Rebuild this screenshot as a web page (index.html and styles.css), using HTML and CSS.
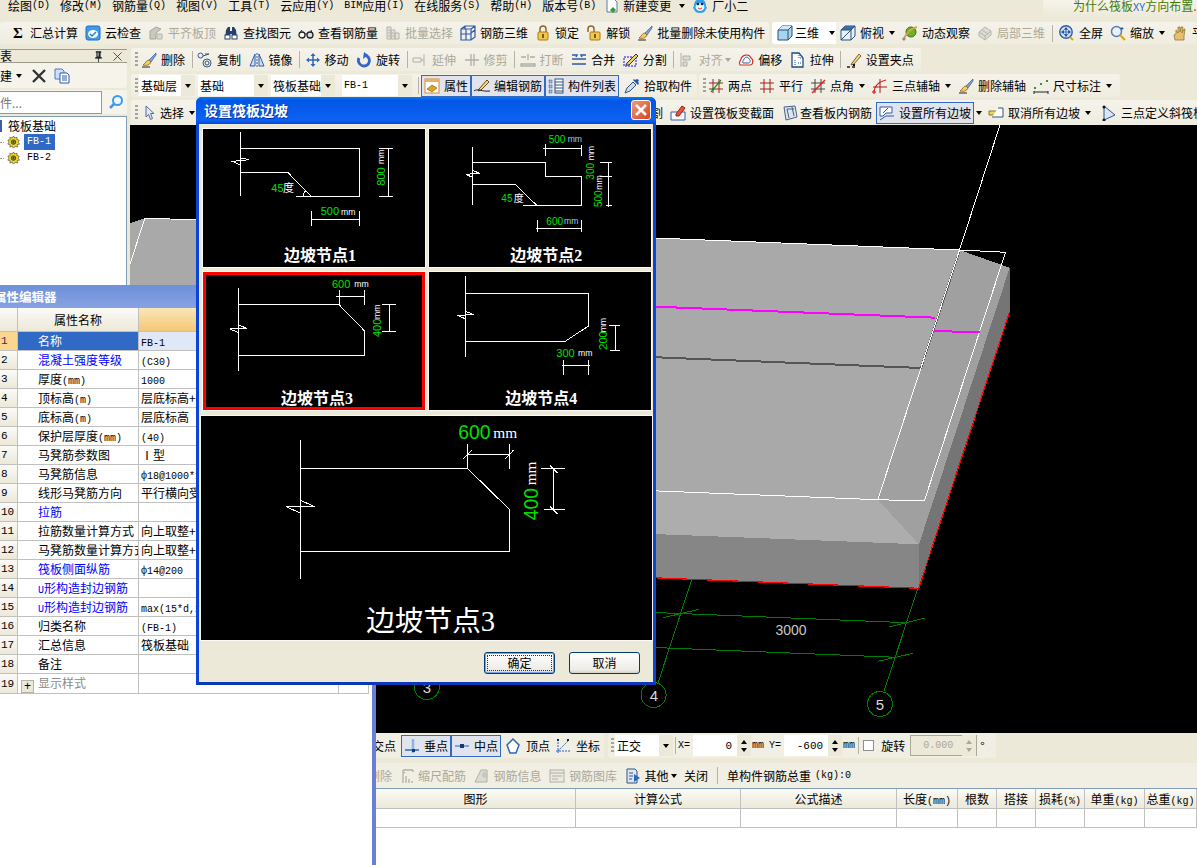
FILE: index.html
```html
<!DOCTYPE html>
<html lang="zh-CN">
<head>
<meta charset="utf-8">
<title>设置筏板边坡</title>
<link rel="stylesheet" href="styles.css">
</head>
<body>
<svg class="defs" xmlns="http://www.w3.org/2000/svg">
<symbol id="cloud" viewBox="0 0 16 16"><rect x="1" y="1" width="14" height="14" rx="2" fill="#3f9be8" stroke="#1f6fc0"/><ellipse cx="8" cy="9" rx="5" ry="4" fill="#fff"/><path d="M5 9l2 2 4-4" fill="none" stroke="#2a7fd0" stroke-width="1.5"/></symbol>
<symbol id="level" viewBox="0 0 16 16"><path d="M2 14V6l6-4 5 2-5 4v6z" fill="#c9c8c0" stroke="#a8a79e"/><path d="M9 9h5v5H9z" fill="#dcdbd3" stroke="#b5b4ab"/></symbol>
<symbol id="binoc" viewBox="0 0 16 16"><path d="M2 14l1-9 2-3h2v12zM14 14l-1-9-2-3H9v12z" fill="#24406e"/><rect x="2" y="10" width="5" height="4" fill="#fff" stroke="#24406e"/><rect x="9" y="10" width="5" height="4" fill="#fff" stroke="#24406e"/><path d="M7 6h2v3H7z" fill="#24406e"/></symbol>
<symbol id="glasses" viewBox="0 0 16 16"><circle cx="4" cy="10" r="3" fill="#fff" stroke="#222" stroke-width="1.3"/><circle cx="12" cy="10" r="3" fill="#dde" stroke="#222" stroke-width="1.3"/><path d="M7 9.5c1-1 1-1 2 0M2 8l2-3M14 8l-1-3" fill="none" stroke="#222"/></symbol>
<symbol id="batch" viewBox="0 0 16 16"><path d="M2 2h4v12H2zM6 5h4v9H6zM10 8h4v6h-4z" fill="#e4e3db" stroke="#b4b3a9"/><path d="M3 5h2M3 8h2M3 11h2M7 8h2M7 11h2" stroke="#b4b3a9"/></symbol>
<symbol id="grid3d" viewBox="0 0 16 16"><path d="M1 4l4-3h10v11l-4 3H1zM1 4h10v11M11 4l4-3M1 9h10M6 4v11M5 1v3M11 8l4-3" fill="none" stroke="#2f5aa8" stroke-width="1.2"/></symbol>
<symbol id="lock" viewBox="0 0 16 16"><path d="M5 7V4a3 3 0 016 0v3" fill="none" stroke="#8a6a20" stroke-width="1.5"/><rect x="3" y="7" width="10" height="8" rx="1" fill="#f2c84b" stroke="#a57a18"/><rect x="7" y="9" width="2" height="4" fill="#7a5a10"/></symbol>
<symbol id="unlock" viewBox="0 0 16 16"><path d="M2 7V4a3 3 0 016 0v3" fill="none" stroke="#8a6a20" stroke-width="1.5"/><rect x="4" y="7" width="10" height="8" rx="1" fill="#f2c84b" stroke="#a57a18"/><rect x="8" y="9" width="2" height="4" fill="#7a5a10"/></symbol>
<symbol id="brush" viewBox="0 0 16 16"><path d="M15 1L8 8l2 2 5-7z" fill="#7f9fe0" stroke="#3a5a9a" stroke-width=".7"/><path d="M8 8c-3 0-3 3-6 5 3 1 7 0 8-3z" fill="#f0d060" stroke="#8a5a20" stroke-width=".8"/><path d="M1 15h8" stroke="#222"/></symbol>
<symbol id="cube" viewBox="0 0 16 16"><path d="M1 5l4-4h10v10l-4 4H1z" fill="#a8d4ee" stroke="#2a4f7a"/><path d="M1 5l4-4h10l-4 4z" fill="#cfe8f6"/><path d="M1 5h10v10M11 5l4-4" fill="none" stroke="#2a4f7a"/></symbol>
<symbol id="cubetop" viewBox="0 0 16 16"><path d="M1 5l4-4h10v10l-4 4H1z" fill="#e8f0f8" stroke="#2a4f7a"/><path d="M1 5l4-4h10l-4 4z" fill="#3a6ea8"/><path d="M1 5h10v10M11 5l4-4M1 15l10-10" fill="none" stroke="#2a4f7a"/></symbol>
<symbol id="orbit" viewBox="0 0 16 16"><circle cx="9" cy="7" r="5" fill="#6fb02a" stroke="#3a7010"/><path d="M1 15C4 9 9 3 15 2" fill="none" stroke="#c9a94a" stroke-width="2"/><circle cx="2" cy="14" r="1.5" fill="#8a8a8a"/></symbol>
<symbol id="part3d" viewBox="0 0 16 16"><path d="M2 7l6-5 6 4v4l-6 5-6-4z" fill="#dcdbd3" stroke="#b8b7ad"/><path d="M2 7l6 4 6-5M8 11v4M5 5l6 4" fill="none" stroke="#b8b7ad"/></symbol>
<symbol id="full" viewBox="0 0 16 16"><circle cx="7" cy="7" r="6.2" fill="#d0dff5" stroke="#2f5aa8" stroke-width="1.4"/><path d="M7 3v8M3 7h8M7 2.500L5.500 4.500h3zM7 11.500L5.500 9.500h3zM2.500 7l2-1.500v3zM11.500 7l-2-1.500v3z" fill="#1f4a98" stroke="#1f4a98" stroke-width=".7"/><path d="M11 12l3 3" stroke="#d9a520" stroke-width="2"/></symbol>
<symbol id="zoomi" viewBox="0 0 16 16"><circle cx="6.500" cy="6.500" r="5" fill="#e8f2ff" stroke="#5a7ab0" stroke-width="1.5"/><path d="M10 10l5 5" stroke="#d9a520" stroke-width="2.200"/><path d="M12 2v3M10.500 3.500h3" stroke="#2f5aa8"/></symbol>
<symbol id="hand" viewBox="0 0 16 16"><path d="M3 15l-1-5 2-1V5l2 3V2h2v5l1-5h2l-1 6 2-4h1l-1 7v4z" fill="#e6c070" stroke="#8a6a20" stroke-width=".7"/></symbol>
<symbol id="copy" viewBox="0 0 16 16"><circle cx="3.500" cy="3.500" r="2.500" fill="none" stroke="#33557f"/><circle cx="10" cy="11" r="4" fill="none" stroke="#33557f"/><circle cx="10" cy="11" r="2" fill="none" stroke="#33557f"/><path d="M6 4l6-2M8 2l4 0" stroke="#33557f"/></symbol>
<symbol id="mirror" viewBox="0 0 16 16"><path d="M6 2L1 14h5zM10 2l5 12h-5z" fill="#cfe0f4" stroke="#2f5aa8"/><path d="M8 1v14" stroke="#2f5aa8" stroke-dasharray="2 1"/></symbol>
<symbol id="move" viewBox="0 0 16 16"><path d="M8 1L5.500 4h5zM8 15l-2.500-3h5zM1 8l3-2.500v5zM15 8l-3-2.500v5z" fill="#2f66b8"/><path d="M8 3v10M3 8h10" stroke="#2f66b8" stroke-width="1.500"/></symbol>
<symbol id="rotate" viewBox="0 0 16 16"><path d="M8 3a5.500 5.500 0 11-5 3" fill="none" stroke="#2f66c8" stroke-width="2.800"/><path d="M8 0l-1 7 5-4z" fill="#2f66c8"/></symbol>
<symbol id="extend" viewBox="0 0 16 16"><path d="M1 6h8v4H1zM12 2v12" fill="none" stroke="#b0afa6"/><path d="M9 8h3" stroke="#b0afa6"/></symbol>
<symbol id="trim" viewBox="0 0 16 16"><path d="M1 8h14M7 2v12M10 2v12" fill="none" stroke="#b0afa6" stroke-width="1.300"/></symbol>
<symbol id="break" viewBox="0 0 16 16"><path d="M1 12h14v2H1zM1 5h5M10 5h5M8 2v6" fill="none" stroke="#b0afa6" stroke-width="1.300"/></symbol>
<symbol id="merge" viewBox="0 0 16 16"><path d="M1 3h5l-1 2M15 3h-5l1 2M1 7h14M1 12h14" fill="none" stroke="#2f5aa8" stroke-width="1.500"/></symbol>
<symbol id="split" viewBox="0 0 16 16"><path d="M1 5h12v9H1z" fill="none" stroke="#1010e0" stroke-dasharray="2 1"/><path d="M4 11L13 2l2 2-9 9H3z" fill="#f0d060" stroke="#333"/></symbol>
<symbol id="align" viewBox="0 0 16 16"><path d="M2 1v14M4 4h7v4H4zM4 10h4v4H4z" fill="#dddcd4" stroke="#b0afa6"/></symbol>
<symbol id="offset" viewBox="0 0 16 16"><path d="M2 13c-2-3 1-4 1-6 1-4 8-6 10-1 3 2 2 7-1 7z" fill="#fff" stroke="#d03020" stroke-width="1.200"/><path d="M5 11c-1-2 1-3 1-4 1-2 4-3 5 0 2 1 1 4 0 4z" fill="none" stroke="#2f5aa8"/></symbol>
<symbol id="stretch" viewBox="0 0 16 16"><path d="M2 1h7l4 5v9H2z" fill="#fff" stroke="#1f4a88" stroke-width="1.300"/><path d="M9 1v5h4M5 8v5M8 11h3" fill="none" stroke="#1f4a88" stroke-dasharray="1 1"/></symbol>
<symbol id="grips" viewBox="0 0 16 16"><path d="M6 11L13 2l2 2-7 8-3 1z" fill="#f0d890" stroke="#8a5a20"/><path d="M1 15h3M6 15h3" stroke="#222" stroke-width="1.500"/><rect x="7" y="12" width="2" height="2" fill="#111"/></symbol>
<symbol id="props" viewBox="0 0 16 16"><rect x="1" y="1" width="14" height="14" fill="#fff" stroke="#d88a30"/><path d="M1 1h14v3H1z" fill="#e9b060"/><path d="M3 11l5-4 5 3-5 4z" fill="#d9a520" stroke="#7a5a10" stroke-width=".6"/></symbol>
<symbol id="editbar" viewBox="0 0 16 16"><path d="M5 11L13 2l2 2-8 8-3 1z" fill="#f0d890" stroke="#6a4a10"/><path d="M0 13c3-3 8 1 16 0" fill="none" stroke="#222"/></symbol>
<symbol id="list" viewBox="0 0 16 16"><path d="M1 2h3v3H1zM1 7h3v3H1zM1 12h3v3H1z" fill="#9ab8e0" stroke="#33557f" stroke-width=".7" stroke-dasharray="1 .6"/><rect x="7" y="1" width="8" height="14" fill="#fff" stroke="#33557f"/><path d="M7 4h8M7 7h8M7 10h8M7 13h8" stroke="#33557f"/></symbol>
<symbol id="pick" viewBox="0 0 16 16"><path d="M1 15l2-5 6-6 3 3-6 6z" fill="#cde" stroke="#33557f"/><path d="M9 2l5 5 1-2-1-1 1-2-2-1-2 1-1-1z" fill="#1f5ab0"/></symbol>
<symbol id="twopt" viewBox="0 0 16 16"><path d="M1 5h14M1 11h14M5 1v14M11 1v14" stroke="#a02020"/><path d="M3 14L13 2" stroke="#2a8a2a" stroke-width="1.200"/><circle cx="5" cy="11" r="1.300" fill="#2a8a2a"/><circle cx="11" cy="5" r="1.300" fill="#2a8a2a"/></symbol>
<symbol id="para" viewBox="0 0 16 16"><path d="M1 5h14M1 11h14M5 1v14M11 1v14" stroke="#a02020"/></symbol>
<symbol id="angle" viewBox="0 0 16 16"><path d="M1 5h14M1 11h14M5 1v14M11 1v14" stroke="#444"/><path d="M2 15L15 2" stroke="#e02020" stroke-width="1.500"/></symbol>
<symbol id="threept" viewBox="0 0 16 16"><path d="M2 15C2 8 6 4 14 2" fill="none" stroke="#e02020" stroke-width="1.200"/><path d="M8 1v14M1 9h14" stroke="#a02020"/><circle cx="2" cy="14" r="1.300" fill="none" stroke="#e02020"/></symbol>
<symbol id="dim" viewBox="0 0 16 16"><path d="M1 13v3M15 13v3M1 14h14" stroke="#222"/><rect x="1" y="9" width="2" height="2" fill="#2a9a2a"/><rect x="13" y="2" width="2" height="2" fill="#2a9a2a"/><rect x="7" y="5" width="2" height="2" fill="#2a9a2a"/></symbol>
<symbol id="cursor" viewBox="0 0 16 16"><path d="M6 1v11l2.500-2.500 2 5 2-1-2-5h3.500z" fill="#dfe8f6" stroke="#5a6a90"/></symbol>
<symbol id="varsec" viewBox="0 0 16 16"><path d="M1 7h14v8H1z" fill="#fff" stroke="#2f5aa8"/><path d="M6 9L12 1l3 2-6 8H6z" fill="#e85040" stroke="#a02010"/></symbol>
<symbol id="viewbar" viewBox="0 0 16 16"><path d="M2 2l11-1 2 11-11 3z" fill="#dfe5ee" stroke="#44608a"/><path d="M5 4h7M5 4l2 9M10 2l2 9" fill="none" stroke="#44608a"/></symbol>
<symbol id="slope" viewBox="0 0 16 16"><path d="M1 2h12v6H7l-3 3H1z" fill="#fff" stroke="#2f5aa8"/><path d="M1 15l6-4h8" fill="none" stroke="#2f5aa8"/><path d="M4 8l5-5" stroke="#2f5aa8"/></symbol>
<symbol id="unslope" viewBox="0 0 16 16"><path d="M1 6h9v4H1z" fill="#f0d060" stroke="#8a7a20"/><path d="M4 12h11V3h-5" fill="#fff" stroke="#33557f"/></symbol>
<symbol id="tilt" viewBox="0 0 16 16"><path d="M3 1l11 9-11 5z" fill="#dbe7f7" stroke="#33557f"/><circle cx="3" cy="2" r="1.500" fill="#112"/><circle cx="3" cy="15" r="1.500" fill="#112"/></symbol>
<symbol id="perp" viewBox="0 0 16 16"><path d="M9 1v14" stroke="#8fb4e8" stroke-width="2.500"/><path d="M1 12h14" stroke="#2f66b8" stroke-width="1.500"/><rect x="8" y="11" width="3" height="3" fill="#103a80"/></symbol>
<symbol id="mid" viewBox="0 0 16 16"><path d="M1 8h14" stroke="#5b8bd0" stroke-width="1.500"/><rect x="6" y="6" width="4" height="4" fill="#103a80"/></symbol>
<symbol id="pent" viewBox="0 0 16 16"><path d="M8 1l6 6-3 8H5L2 7z" fill="#fff" stroke="#2f66b8" stroke-width="1.500"/></symbol>
<symbol id="coord" viewBox="0 0 16 16"><path d="M3 1v14M1 13h14M3 13l10-10" fill="none" stroke="#2f66b8" stroke-dasharray="2 1"/><rect x="2" y="1" width="2" height="2" fill="#222"/><rect x="12" y="1" width="2" height="2" fill="#222"/></symbol>
<symbol id="scale" viewBox="0 0 12 16"><path d="M1 2h10M1 2v13M4 15V8M7 15v-4M10 15v-2M3 4l-1 1M11 2v2" fill="none" stroke="#b0afa6" stroke-width="1.300"/></symbol>
<symbol id="info" viewBox="0 0 16 16"><path d="M1 14l6-12h6v12z" fill="#dddcd4" stroke="#b0afa6"/><circle cx="11" cy="7" r="3" fill="#c9c8c0"/></symbol>
<symbol id="lib" viewBox="0 0 16 16"><rect x="1" y="2" width="14" height="12" fill="#eceae0" stroke="#b0afa6"/><path d="M1 5h14M3 8h10M3 11h6" stroke="#b0afa6"/></symbol>
<symbol id="other" viewBox="0 0 16 16"><path d="M2 1h8l2 2v12H2z" fill="#dce7f7" stroke="#33557f"/><path d="M9 6l6 4-6 4z" fill="#2f66c8"/><path d="M4 5h4M4 8h4M4 11h3" stroke="#33557f"/></symbol>
<symbol id="newdoc" viewBox="0 0 16 16"><path d="M3 1h7l3 3v10H3z" fill="#fff" stroke="#5a7ab0"/><path d="M9 15l-3-3 3-3 3 3z" fill="#3a9a2a"/></symbol>
<symbol id="face" viewBox="0 0 16 16"><path d="M8 1c4 0 6 3 6 7l1 2-1 1c-1 3-3 4-6 4s-5-1-6-4l-1-1 1-2c0-4 2-7 6-7z" fill="#29a0e8"/><ellipse cx="8" cy="9" rx="4.500" ry="4" fill="#e7f6ff"/><circle cx="6" cy="6" r="1.300" fill="#123"/><circle cx="10" cy="6" r="1.300" fill="#123"/><path d="M6 10q2 2 4 0" fill="none" stroke="#e04030"/></symbol>
<symbol id="xmark" viewBox="0 0 16 16"><path d="M2 2l12 12M14 2L2 14" stroke="#333" stroke-width="2.400"/></symbol>
<symbol id="docs" viewBox="0 0 16 16"><path d="M1 1h7l2 2v8H1z" fill="#cfe0f8" stroke="#4a7ac0"/><path d="M6 5h7l2 2v8H6z" fill="#fff" stroke="#2f5aa8"/><path d="M8 8h5M8 10h5M8 12h5" stroke="#2f5aa8"/></symbol>
<symbol id="search" viewBox="0 0 16 16"><circle cx="9.500" cy="6.500" r="4.500" fill="#eef6ff" stroke="#3f9be8" stroke-width="2"/><path d="M6 10l-4 4" stroke="#3f9be8" stroke-width="2.500"/></symbol>
<symbol id="pin" viewBox="0 0 16 16"><path d="M5 2h6v1h-1v5l2 2H4l2-2V3H5zM8 10v5" fill="#222" stroke="#222"/><path d="M7.500 3v5" stroke="#fff"/></symbol>
<symbol id="closex" viewBox="0 0 16 16"><path d="M3 3l10 10M13 3L3 13" stroke="#333"/></symbol>
<symbol id="gear" viewBox="0 0 16 16"><path d="M8 0l1.500 2.500 3-1-.5 3 3 .5-1.500 2.500L15.500 10l-3 .5.500 3-3-1L8 15l-1.500-2.500-3 1 .5-3-3-.5L2.500 7.500 1 5l3-.5-.5-3 3 1z" fill="#f4e020" stroke="#444" stroke-width=".8"/><circle cx="8" cy="7.500" r="2.800" fill="#d8c820" stroke="#333"/><path d="M6 5.500l4 4M10 5.500l-4 4M8 5v5M5.500 7.500h5" stroke="#333" stroke-width=".7"/></symbol>
</svg>

<header class="menubar">
  <span class="menu">绘图<span class="lat">(D)</span></span>
  <span class="menu">修改<span class="lat">(M)</span></span>
  <span class="menu">钢筋量<span class="lat">(Q)</span></span>
  <span class="menu">视图<span class="lat">(V)</span></span>
  <span class="menu">工具<span class="lat">(T)</span></span>
  <span class="menu">云应用<span class="lat">(Y)</span></span>
  <span class="menu"><span class="lat">BIM</span>应用<span class="lat">(I)</span></span>
  <span class="menu">在线服务<span class="lat">(S)</span></span>
  <span class="menu">帮助<span class="lat">(H)</span></span>
  <span class="menu">版本号<span class="lat">(B)</span></span>
  <span class="menu menu-new"><svg class="ic"><use href="#newdoc"/></svg>新建变更<i class="caret"></i></span>
  <span class="menu menu-face"><svg class="ic"><use href="#face"/></svg>厂小二</span>
  <span class="menu-ask">为什么筏板<span class="ask-xy">XY</span>方向布置.</span>
</header>

<div class="mainbar">
  <div class="bar bar-main">
    <span class="tool"><span class="sigma">Σ</span>汇总计算</span>
    <span class="tool"><svg class="ic"><use href="#cloud"/></svg>云检查</span>
    <span class="tool off"><svg class="ic"><use href="#level"/></svg>平齐板顶</span>
    <span class="tool"><svg class="ic"><use href="#binoc"/></svg>查找图元</span>
    <span class="tool"><svg class="ic"><use href="#glasses"/></svg>查看钢筋量</span>
    <span class="tool off"><svg class="ic"><use href="#batch"/></svg>批量选择</span>
    <span class="tool"><svg class="ic"><use href="#grid3d"/></svg>钢筋三维</span>
    <span class="tool"><svg class="ic"><use href="#lock"/></svg>锁定</span>
    <span class="tool"><svg class="ic"><use href="#unlock"/></svg>解锁</span>
    <span class="tool"><svg class="ic"><use href="#brush"/></svg>批量删除未使用构件</span>
  </div>
  <div class="bar bar-view">
    <span class="tool tool-3d"><svg class="ic"><use href="#cube"/></svg>三维<i class="caret"></i></span>
    <span class="tool"><svg class="ic"><use href="#cubetop"/></svg>俯视<i class="caret"></i></span>
    <span class="tool"><svg class="ic"><use href="#orbit"/></svg>动态观察</span>
    <span class="tool off"><svg class="ic"><use href="#part3d"/></svg>局部三维</span>
    <i class="sep"></i>
    <span class="tool"><svg class="ic"><use href="#full"/></svg>全屏</span>
    <span class="tool"><svg class="ic"><use href="#zoomi"/></svg>缩放<i class="caret"></i></span>
    <span class="tool"><svg class="ic"><use href="#hand"/></svg>平移</span>
  </div>
</div>

<div class="workspace">
  <aside class="tree-panel">
    <div class="tree-head"><span>表</span><span class="tree-head-btns"><svg class="ic-s"><use href="#pin"/></svg><svg class="ic-s"><use href="#closex"/></svg></span></div>
    <div class="tree-tools"><span>建</span><i class="caret"></i><svg class="ic"><use href="#xmark"/></svg><svg class="ic"><use href="#docs"/></svg></div>
    <div class="tree-search"><span class="tree-input">件...</span><svg class="ic"><use href="#search"/></svg></div>
    <div class="tree">
      <div class="tree-root"><i class="root-icon"></i>筏板基础</div>
      <div class="tree-item"><i class="dots"></i><svg class="ic-s"><use href="#gear"/></svg><span class="tree-label selected lat">FB-1</span></div>
      <div class="tree-item"><i class="dots"></i><svg class="ic-s"><use href="#gear"/></svg><span class="tree-label lat">FB-2</span></div>
    </div>
  </aside>

  <main class="center">
    <div class="bar row row-edit">
      <i class="grip"></i>
      <span class="tool"><svg class="ic"><use href="#brush"/></svg>删除</span><i class="sep"></i>
      <span class="tool"><svg class="ic"><use href="#copy"/></svg>复制</span>
      <span class="tool"><svg class="ic"><use href="#mirror"/></svg>镜像</span><i class="sep"></i>
      <span class="tool"><svg class="ic"><use href="#move"/></svg>移动</span>
      <span class="tool"><svg class="ic"><use href="#rotate"/></svg>旋转</span><i class="sep"></i>
      <span class="tool off"><svg class="ic"><use href="#extend"/></svg>延伸</span>
      <span class="tool off"><svg class="ic"><use href="#trim"/></svg>修剪</span><i class="sep"></i>
      <span class="tool off"><svg class="ic"><use href="#break"/></svg>打断</span>
      <span class="tool"><svg class="ic"><use href="#merge"/></svg>合并</span>
      <span class="tool"><svg class="ic"><use href="#split"/></svg>分割</span><i class="sep"></i>
      <span class="tool off"><svg class="ic"><use href="#align"/></svg>对齐<i class="caret caret-off"></i></span>
      <span class="tool"><svg class="ic"><use href="#offset"/></svg>偏移</span>
      <span class="tool"><svg class="ic"><use href="#stretch"/></svg>拉伸</span><i class="sep"></i>
      <span class="tool"><svg class="ic"><use href="#grips"/></svg>设置夹点</span>
    </div>

    <div class="rowset">
      <div class="bar row row-combo">
        <i class="grip"></i>
        <span class="combo combo-a">基础层<i class="combo-btn"><i class="caret"></i></i></span>
        <span class="combo combo-b">基础<i class="combo-btn"><i class="caret"></i></i></span>
        <span class="combo combo-c">筏板基础<i class="combo-btn"><i class="caret"></i></i></span>
        <span class="combo combo-d"><span class="lat">FB-1</span><i class="combo-btn"><i class="caret"></i></i></span>
        <i class="sep sep-combo"></i>
        <span class="tool boxed"><svg class="ic"><use href="#props"/></svg>属性</span>
        <span class="tool boxed"><svg class="ic"><use href="#editbar"/></svg>编辑钢筋</span>
        <span class="tool boxed"><svg class="ic"><use href="#list"/></svg>构件列表</span>
        <span class="tool tool-pick"><svg class="ic"><use href="#pick"/></svg>拾取构件</span>
      </div>
      <div class="bar row row-axis">
        <i class="grip"></i>
        <span class="tool"><svg class="ic"><use href="#twopt"/></svg>两点</span>
        <span class="tool"><svg class="ic"><use href="#para"/></svg>平行</span>
        <span class="tool"><svg class="ic"><use href="#angle"/></svg>点角<i class="caret"></i></span>
        <span class="tool"><svg class="ic"><use href="#threept"/></svg>三点辅轴<i class="caret"></i></span>
        <span class="tool"><svg class="ic"><use href="#brush"/></svg>删除辅轴</span>
        <span class="tool"><svg class="ic"><use href="#dim"/></svg>尺寸标注<i class="caret"></i></span>
      </div>
    </div>

    <div class="bar row row-select">
      <i class="grip"></i>
      <span class="tool"><svg class="ic"><use href="#cursor"/></svg>选择<i class="caret"></i></span>
      <span class="tool tool-hidden"><svg class="ic"><use href="#split"/></svg>手动分割</span>
      <span class="tool"><svg class="ic"><use href="#varsec"/></svg>设置筏板变截面</span>
      <span class="tool tool-view"><svg class="ic"><use href="#viewbar"/></svg>查看板内钢筋</span>
      <span class="tool boxed"><svg class="ic"><use href="#slope"/></svg>设置所有边坡</span><i class="caret caret-after"></i>
      <span class="tool"><svg class="ic"><use href="#unslope"/></svg>取消所有边坡<i class="caret"></i></span>
      <span class="tool tool-clip"><svg class="ic"><use href="#tilt"/></svg>三点定义斜筏板</span>
    </div>

    <svg class="viewport" viewBox="130 125 1067 608" xmlns="http://www.w3.org/2000/svg">
      <polygon class="s-top" points="130,223 145,218 959.5,250 877.8,499.7 130,470"/>
      <polygon class="s-bevel-b" points="130,470 877.8,499.7 919,544.3 130,513.700"/>
      <polygon class="s-front" points="130,513.700 919,544.300 918.700,588.300 130,557"/>
      <polygon class="s-bevel-r" points="959.5,250 1009.700,267.700 919,544.300 877.800,499.700"/>
      <polygon class="s-side" points="1009.700,267.700 1009.700,311.700 918.700,588.300 919,544.300"/>
      <polyline class="l-dark" points="130,336 921,368 959.500,251"/>
      <polyline class="l-white" points="145,218 959.5,250 1005.500,252.300 924.300,501 877.800,499.700 130,470"/>
      <polyline class="l-white" points="1000,125 959.500,250 877.800,499.700"/>
      <line class="l-white" x1="145" y1="218" x2="130" y2="264"/>
      <line class="l-mag" x1="130" y1="286" x2="935.400" y2="317.700"/>
      <line class="l-mag" x1="934" y1="331" x2="979.700" y2="332.300"/>
      <polyline class="l-red" points="130,557 918.700,588.300 1009.700,311.700"/>
      <g class="l-green">
        <line x1="420" y1="603" x2="907" y2="622.700"/>
        <line x1="420" y1="638" x2="896.400" y2="657.300"/>
        <line x1="663" y1="617.700" x2="699" y2="609.300"/>
        <line x1="889" y1="627" x2="925" y2="618"/>
        <line x1="878" y1="661.300" x2="913" y2="653.300"/>
        <line x1="691.800" y1="579.300" x2="657.900" y2="683.300"/>
        <line x1="917.900" y1="588.300" x2="884" y2="691"/>
        <circle cx="426.800" cy="687" r="12.500"/>
        <circle cx="653.600" cy="695" r="12.500"/>
        <circle cx="880" cy="704" r="12.500"/>
      </g>
      <g class="v-num">
        <text x="427" y="693">3</text>
        <text x="654" y="701">4</text>
        <text x="880" y="710">5</text>
        <text class="v-dim" x="791" y="635">3000</text>
      </g>
    </svg>

    <div class="snapbar">
      <div class="subbar">
        <span class="tool snap-first">交点</span>
        <span class="tool boxed"><svg class="ic"><use href="#perp"/></svg>垂点</span>
        <span class="tool boxed"><svg class="ic"><use href="#mid"/></svg>中点</span>
        <span class="tool tool-snap"><svg class="ic"><use href="#pent"/></svg>顶点</span>
        <span class="tool tool-snap"><svg class="ic"><use href="#coord"/></svg>坐标</span>
      </div>
      <div class="subbar subbar-coord">
        <i class="grip"></i>
        <span class="combo combo-e">正交<i class="combo-btn"><i class="caret"></i></i></span>
        <i class="sep sep-plain"></i>
        <span class="lat">X=</span>
        <span class="num"><span class="num-val lat">0</span><i class="spin"></i></span>
        <span class="lat unit">mm</span>
        <span class="lat">Y=</span>
        <span class="num"><span class="num-val lat">-600</span><i class="spin"></i></span>
        <span class="lat unit unit-last">mm</span>
        <i class="sep sep-plain"></i>
        <i class="check"></i>
        <span class="rot-label">旋转</span>
        <span class="num-off"><span class="lat">0.000</span><i class="spin spin-off"></i></span>
        <span class="deg">°</span>
      </div>
    </div>

    <div class="rebarbar">
      <span class="tool off tool-del">删除</span>
      <span class="tool off"><svg class="ic ic-12"><use href="#scale"/></svg>缩尺配筋</span>
      <span class="tool off"><svg class="ic"><use href="#info"/></svg>钢筋信息</span>
      <span class="tool off"><svg class="ic"><use href="#lib"/></svg>钢筋图库</span>
      <span class="tool"><svg class="ic"><use href="#other"/></svg>其他<i class="caret caret-tight"></i></span>
      <span class="tool">关闭</span>
      <i class="sep sep-plain"></i>
      <span class="tool">单构件钢筋总重<span class="lat">(kg):0</span></span>
    </div>

    <div class="rebar-table">
      <div class="rt-row rt-head">
        <span class="rt-first">图形</span><span>计算公式</span><span>公式描述</span>
        <span>长度<span class="lat">(mm)</span></span><span>根数</span><span>搭接</span>
        <span>损耗<span class="lat">(%)</span></span><span>单重<span class="lat">(kg)</span></span><span>总重<span class="lat">(kg)</span></span>
      </div>
      <div class="rt-row">
        <span class="rt-first"></span><span></span><span></span><span></span><span></span><span></span><span></span><span></span><span></span>
      </div>
    </div>
  </main>
</div>

<section class="props">
  <h2 class="props-title">属性编辑器</h2>
  <table class="props-table">
    <colgroup><col class="c-num"><col class="c-name"><col class="c-val"><col class="c-extra"></colgroup>
    <thead><tr><th class="n"></th><th>属性名称</th><th class="hot">属性值</th><th class="hot"></th></tr></thead>
    <tbody>
      <tr class="cur"><td class="n">1</td><td class="name">名称</td><td class="v"><span class="lat">FB-1</span></td><td></td></tr>
      <tr><td class="n">2</td><td class="name link">混凝土强度等级</td><td class="v"><span class="lat">(C30)</span></td><td></td></tr>
      <tr><td class="n">3</td><td class="name">厚度<span class="lat">(mm)</span></td><td class="v"><span class="lat">1000</span></td><td></td></tr>
      <tr><td class="n">4</td><td class="name">顶标高<span class="lat">(m)</span></td><td class="v">层底标高+1000</td><td></td></tr>
      <tr><td class="n">5</td><td class="name">底标高<span class="lat">(m)</span></td><td class="v">层底标高</td><td></td></tr>
      <tr><td class="n">6</td><td class="name">保护层厚度<span class="lat">(mm)</span></td><td class="v"><span class="lat">(40)</span></td><td></td></tr>
      <tr><td class="n">7</td><td class="name">马凳筋参数图</td><td class="v">Ⅰ型</td><td></td></tr>
      <tr><td class="n">8</td><td class="name">马凳筋信息</td><td class="v"><span class="lat">ф18@1000*1000</span></td><td></td></tr>
      <tr><td class="n">9</td><td class="name">线形马凳筋方向</td><td class="v">平行横向受力筋</td><td></td></tr>
      <tr><td class="n">10</td><td class="name link">拉筋</td><td class="v"></td><td></td></tr>
      <tr><td class="n">11</td><td class="name">拉筋数量计算方式</td><td class="v">向上取整+1</td><td></td></tr>
      <tr><td class="n">12</td><td class="name">马凳筋数量计算方式</td><td class="v">向上取整+1</td><td></td></tr>
      <tr><td class="n">13</td><td class="name link">筏板侧面纵筋</td><td class="v"><span class="lat">ф14@200</span></td><td></td></tr>
      <tr><td class="n">14</td><td class="name link"><span class="lat">U</span>形构造封边钢筋</td><td class="v"></td><td></td></tr>
      <tr><td class="n">15</td><td class="name link"><span class="lat">U</span>形构造封边钢筋</td><td class="v"><span class="lat">max(15*d,200)</span></td><td></td></tr>
      <tr><td class="n">16</td><td class="name">归类名称</td><td class="v"><span class="lat">(FB-1)</span></td><td></td></tr>
      <tr><td class="n">17</td><td class="name">汇总信息</td><td class="v">筏板基础</td><td></td></tr>
      <tr><td class="n">18</td><td class="name">备注</td><td class="v"></td><td></td></tr>
      <tr><td class="n">19</td><td class="name muted"><i class="plus">+</i>显示样式</td><td class="v"></td><td></td></tr>
    </tbody>
  </table>
</section>

<section class="dialog">
  <header class="dlg-title"><span>设置筏板边坡</span><i class="dlg-close"><svg viewBox="0 0 16 16"><path d="M3 3l10 10M13 3L3 13" stroke="#fff" stroke-width="2.600"/></svg></i></header>
  <div class="dlg-body">
    <div class="thumbs">
      <div class="thumb">
        <svg viewBox="20 98 666 414" xmlns="http://www.w3.org/2000/svg">
          <path class="ln" d="M133 108V298M133 157H488V300H300M133 229H275L345 300M133 185L158 190L108 195L130 205M575 155V303M548 157H590M548 301H590M345 370H490M346 345V388M488 345V388M320 300Q320 288 330 284"/>
          <text class="g t33" x="225" y="288">45</text><text class="w t33" x="260" y="288">度</text>
          <text class="g t33" x="373" y="356">500</text><text class="w t26" x="434" y="356">mm</text>
          <text class="g t33" transform="rotate(-90 566 268)" x="566" y="268">800</text><text class="w t26" transform="rotate(-90 564 203)" x="564" y="203">mm</text>
          <text class="lab" x="371" y="495">边坡节点1</text>
        </svg>
      </div>
      <div class="thumb">
        <svg viewBox="698 98 666 414" xmlns="http://www.w3.org/2000/svg">
          <path class="ln" d="M829 153V325M829 199H1046V241H1154V328H981M958 265L1022 328M829 265H958M829 222L850 231L808 234L829 243M1040 155H1158M1046 142V180M1154 145V180M1237 198V332M1210 199H1248M1210 241H1248M1230 328H1248M1020 395H1158M1024 372V408M1154 372V408"/>
          <text class="g t30" x="1057" y="140">500</text><text class="c t26" x="1114" y="138">mm</text>
          <text class="w t26" transform="rotate(-90 1192 192)" x="1192" y="192">mm</text><text class="g t30" transform="rotate(-90 1194 250)" x="1194" y="250">300</text>
          <text class="g t30" transform="rotate(-90 1218 332)" x="1218" y="332">500</text><text class="w t26" transform="rotate(-90 1216 280)" x="1216" y="280">mm</text>
          <text class="g t30" x="915" y="318">45</text><text class="w t30" x="952" y="318">度</text>
          <text class="g t30" x="1050" y="385">600</text><text class="c t26" x="1103" y="382">mm</text>
          <text class="lab" x="1050" y="495">边坡节点2</text>
        </svg>
      </div>
      <div class="thumb selected">
        <svg viewBox="20 527 666 414" xmlns="http://www.w3.org/2000/svg">
          <path class="ln" d="M125 575V825M125 625H428L503 702V778H125M125 686L152 696L100 698L125 708M420 601H505M428 582V625M503 582V625M580 623V708M558 625H600M558 705H600"/>
          <text class="g t33" x="407" y="575">600</text><text class="w t26" x="474" y="572">mm</text>
          <text class="g t33" transform="rotate(-90 553 722)" x="553" y="722">400</text><text class="w t26" transform="rotate(-90 550 668)" x="550" y="668">mm</text>
          <text class="lab" x="362" y="924">边坡节点3</text>
        </svg>
      </div>
      <div class="thumb">
        <svg viewBox="698 527 666 414" xmlns="http://www.w3.org/2000/svg">
          <path class="ln" d="M808 538V782M808 590H1175V690L1105 736H808M808 645L833 655L783 657L808 668M1098 808H1180M1102 792V835M1175 792V835M1256 688V762M1238 688H1272M1242 762H1272"/>
          <text class="g t33" x="1080" y="782">300</text><text class="w t26" x="1145" y="780">mm</text>
          <text class="g t33" transform="rotate(-90 1232 760)" x="1232" y="760">200</text><text class="w t26" transform="rotate(-90 1228 708)" x="1228" y="708">mm</text>
          <text class="lab" x="1035" y="924">边坡节点4</text>
        </svg>
      </div>
    </div>
    <div class="preview">
      <svg viewBox="15 17 1353 672" xmlns="http://www.w3.org/2000/svg">
        <path class="ln" d="M314 90V506M314 175H815L940 297V424H314M314 270L356 289L271 289L314 309M815 132H940M815 100V175M940 100V175M1073 172V298M1035 175H1107M1045 298H1107M803 145L827 120M928 145L952 120M1062 165L1085 188M1062 288L1085 311"/>
        <text class="g t58" x="787" y="86">600</text><text class="w-serif t46" x="892" y="82">mm</text>
        <text class="g t58" transform="rotate(-90 1026 330)" x="1026" y="330">400</text><text class="w-serif t46" transform="rotate(-90 1020 225)" x="1020" y="225">mm</text>
        <text class="lab-lg" x="704" y="662">边坡节点3</text>
      </svg>
    </div>
    <footer class="dlg-foot">
      <button class="btn btn-default" type="button">确定</button>
      <button class="btn" type="button">取消</button>
    </footer>
  </div>
</section>
</body>
</html>
```
FILE: styles.css
```css
* { box-sizing: border-box; }
html, body { margin: 0; height: 100%; }
body {
  width: 1197px; height: 865px; overflow: hidden; position: relative;
  background: #ece9d8; color: #000;
  font: 12px/16px "Noto Sans CJK SC", "Liberation Sans", sans-serif;
}
i { font-style: normal; }
.defs { display: none; }
.lat { font: 10px/16px "Liberation Mono", "Noto Sans CJK SC", monospace; }
.ic { width: 16px; height: 16px; flex: none; display: block; }
.ic-12 { width: 12px; }
.ic-s { width: 13px; height: 13px; flex: none; display: block; }

/* menu */
.menubar { height: 20px; display: flex; align-items: flex-start; padding-left: 8px; gap: 10px; overflow: hidden; }
.menu { display: flex; align-items: center; height: 12px; line-height: 12px; white-space: nowrap; }
.menu .lat { line-height: 12px; }
.menu-new { margin-left: -2px; gap: 3px; }
.menu-face { margin-left: -3px; gap: 4px; }
.menu-new .caret { margin-left: 5px; }
.menu-ask { margin-left: auto; width: 154px; height: 18px; padding-left: 30px; background: linear-gradient(#f6f4ea, #ece9d8); color: #3f7a0a; white-space: nowrap; overflow: hidden; line-height: 12px; }
.ask-xy { color: #2a6fd0; font-size: 11px; }

/* toolbars */
.bar { background: linear-gradient(#f5f3ea, #efede0); border-radius: 3px; }
.mainbar { height: 24px; margin-top: 2px; display: flex; gap: 3px; }
.bar-main { width: 769px; display: flex; align-items: center; gap: 7px; padding-left: 10px; height: 22px; }
.bar-view { flex: 1; display: flex; align-items: center; gap: 7px; height: 22px; overflow: hidden; }
.bar-view .sep { margin: 0 -1px 0 0; }
.tool { display: flex; align-items: center; gap: 4px; height: 21px; white-space: nowrap; flex: none; }
.off { color: #aca899; }
.sigma { width: 16px; text-align: center; font: bold 15px/16px "Liberation Serif", serif; }
.caret { display: inline-block; width: 0; height: 0; flex: none; margin: 0 0 0 1px; border-left: 3.5px solid transparent; border-right: 3.5px solid transparent; border-top: 4px solid #000; }
.caret-off { margin-left: -2px; border-top-color: #aca899; }
.caret-tight { margin-left: -2px; }
.tool-3d { background: #fff; width: 64px; height: 22px; padding-left: 5px; gap: 2px; margin-right: -3px; }
.tool-3d .caret { margin-left: 8px; }
.sep { width: 1px; height: 17px; background: #b5b3a5; flex: none; margin: 0 -3px 0 -1px; }
.grip { width: 3px; height: 15px; flex: none; background: repeating-linear-gradient(#a5a396 0 2px, transparent 2px 4px); }

/* workspace */
.workspace { display: flex; height: 819px; }
.tree-panel { width: 130px; flex: none; padding-right: 3px; padding-top: 3px; }
.tree-head { height: 14px; border-top: 1px solid #9c9a8c; border-bottom: 1px solid #9c9a8c; background: #ece9d8; display: flex; justify-content: space-between; align-items: center; }
.tree-head-btns { display: flex; gap: 6px; padding-right: 3px; }
.tree-tools { height: 25px; display: flex; align-items: center; background: #f5f3ea; border-radius: 0 3px 3px 0; }
.tree-tools .caret { margin: 0 9px 0 4px; }
.tree-tools .ic + .ic { margin-left: 7px; }
.tree-search { height: 24px; margin-top: 2px; display: flex; align-items: center; gap: 6px; background: #f5f3ea; }
.tree-input { width: 102px; height: 23px; background: #fff; border: 1px solid #7f9db9; border-left: 0; line-height: 21px; color: #777; }
.tree { height: 700px; margin-top: 2px; background: #fff; border: 1px solid #7f9db9; border-width: 1px 1px 0 0; }
.tree-root { height: 17px; display: flex; align-items: center; line-height: 18px; }
.root-icon { width: 2px; height: 12px; margin-right: 6px; background: #3a5fa8; }
.tree-item { height: 16px; display: flex; align-items: center; gap: 3px; }
.dots { width: 4px; border-bottom: 1px dotted #999; }
.tree-label { height: 16px; padding: 0 3px; margin-left: 1px; width: 31px; }
.tree-label.selected { background: #316ac5; color: #fff; }

.center { flex: 1; min-width: 0; display: flex; flex-direction: column; }
.row { height: 23px; display: flex; align-items: center; margin-left: 1px; flex: none; }
.row-edit { width: 790px; padding-left: 4px; gap: 7.5px; margin-top: 2px; }
.row-edit .grip { margin-right: -4.500px; }
.rowset { display: flex; gap: 2px; margin-top: 3px; height: 23px; flex: none; }
.row-combo { width: 566px; padding-left: 4px; gap: 3px; }
.row-combo .grip { margin-right: -2px; }
.row-axis { width: 421px; padding-left: 4px; gap: 7px; margin-left: 0; }
.row-axis .grip { margin-right: -5px; }
.combo { display: flex; justify-content: space-between; align-items: center; height: 21px; background: #fff; padding-left: 2px; flex: none; white-space: nowrap; }
.combo-a { width: 56px; } .combo-b { width: 70px; } .combo-c { width: 59px; } .combo-d { width: 70px; margin-left: 9px; }
.combo-e { width: 58px; }
.combo-btn { width: 14px; height: 21px; background: #ece9d8; display: flex; align-items: center; justify-content: center; flex: none; }
.combo-btn .caret { margin: 0; }
.sep-combo { margin: 0 -1px 0 3px; }
.boxed { height: 22px; border: 1px solid #316ac5; background: #e1e4ed; padding: 0 2px; margin: 0 -3px 0 0; }
.tool-pick { margin-left: 5px; }
.row-select { margin-top: 3px; height: 25px; padding-left: 4px; gap: 8px; overflow: hidden; }
.row-select .grip { margin-right: -6px; }
.tool-hidden { margin-left: 392px; margin-right: -1px; }
.tool-view { gap: 2px; }
.row-select .boxed { margin: 0 0 0 -4px; }
.row-select .caret-after { margin: 0 -2px 0 -6px; }
.tool-clip { flex: 1; margin-left: 2px; }

.viewport { display: block; width: 1067px; height: 608px; background: #000; flex: none; }
.viewport polyline, .viewport line, .viewport circle, .viewport polygon { shape-rendering: crispEdges; }
.s-top { fill: #a9a9a9; } .s-bevel-b { fill: #adadad; } .s-front { fill: #868686; }
.s-bevel-r { fill: #a0a0a0; } .s-side { fill: #757575; }
polyline, line { fill: none; }
.l-white { stroke: #fff; stroke-width: 1; }
.l-dark { stroke: #555; stroke-width: 2; }
.l-mag { stroke: #ff00ff; stroke-width: 2; }
.l-red { stroke: #ff0000; stroke-width: 1.200; }
.l-green line, .l-green circle { stroke: #008000; stroke-width: 1; fill: none; }
.v-num text { fill: #d8d8d8; font: 15px "Liberation Sans", sans-serif; text-anchor: middle; }
.v-num .v-dim { font-size: 14px; fill: #c8c8c8; }

.snapbar { margin-left: 245px; height: 30px; flex: none; display: flex; gap: 4px; }
.subbar { display: flex; align-items: center; background: #f1efe4; height: 25px; border-radius: 3px; padding-right: 3px; }
.snap-first { width: 21px; margin-right: 5px; justify-content: flex-end; }
.snapbar .boxed { height: 22px; margin: 0; }
.tool-snap { margin-left: 4px; gap: 5px; margin-right: 1px; }
.subbar-coord { padding-left: 3px; width: 388px; }
.subbar-coord .combo { margin-left: 1px; }
.sep-plain { margin: 0 2px; }
.num { display: flex; width: 58px; height: 21px; background: #fff; align-items: center; margin: 0 1px 0 3px; }
.num-val { flex: 1; text-align: right; padding-right: 5px; font-size: 11px; }
.spin { position: relative; width: 14px; height: 21px; background: #ece9d8; flex: none; }
.spin::before, .spin::after { content: ""; position: absolute; left: 4px; border-left: 3px solid transparent; border-right: 3px solid transparent; }
.spin::before { top: 5px; border-bottom: 4px solid #000; }
.spin::after { bottom: 4px; border-top: 4px solid #000; }
.spin-off::before { border-bottom-color: #aca899; }
.spin-off::after { border-top-color: #aca899; }
.unit { margin: 0 5px 0 0; }
.unit-last { margin-right: 1px; }
.check { width: 11px; height: 11px; border: 1px solid #8e8f8f; background: #fff; margin: 0 7px 0 2px; flex: none; }
.rot-label { margin-right: 5px; }
.num-off { display: flex; align-items: center; width: 67px; height: 21px; border: 1px solid #aca899; background: #ece9d8; color: #aca899; padding-left: 12px; justify-content: space-between; }
.deg { margin-left: 3px; }

.rebarbar { margin-left: 230px; height: 25px; flex: none; display: flex; align-items: center; gap: 7.5px; background: #f1efe4; }
.tool-del { width: 32px; justify-content: flex-end; margin-right: 2.500px; }
.rebarbar .sep-plain { margin: 0 2px 0 1px; }
.rebar-table { flex: 1; margin-left: 246px; background: #fff; border-top: 1px solid #7f9db9; }
.rt-row { display: grid; grid-template-columns: 200px 165px 156px 61px 39px 39px 49px 60px 52px; height: 19px; border-bottom: 1px solid #c0c0c0; overflow: hidden; }
.rt-row > span { border-right: 1px solid #c0c0c0; text-align: center; white-space: nowrap; overflow: hidden; }
.rt-head { height: 20px; background: linear-gradient(#fbfaf6, #ece9d8); line-height: 19px; }
.rt-head .lat { line-height: 10px; }

/* property panel: docked over the canvas */
.props { position: absolute; left: 0; top: 285px; width: 376px; height: 580px; background: #fff; border-right: 4px solid #6b7fd4; z-index: 2; overflow: hidden; }
.props-title { margin: 0 0 0 -6px; height: 23px; padding-top: 1px; background: linear-gradient(#6e90d8, #86a2e2); color: #fff; font: bold 12.500px/21px "Noto Sans CJK SC", sans-serif; white-space: nowrap; }
.props-table { width: 369px; table-layout: fixed; border-collapse: separate; border-spacing: 0; }
.c-num { width: 18px; } .c-name { width: 121px; } .c-val { width: 200px; } .c-extra { width: 30px; }
.props-table th { height: 24px; padding: 0; font-weight: 400; background: linear-gradient(#fbfaf6, #ece9d8); border-right: 1px solid #c0c0c0; border-bottom: 1px solid #c0c0c0; }
.props-table th.hot { background: linear-gradient(#fae6b6, #f5c777); }
.props-table td { height: 19px; padding: 0; border-right: 1px solid #c0c0c0; border-bottom: 1px solid #c0c0c0; white-space: nowrap; overflow: hidden; line-height: 18px; }
.props-table .lat { line-height: 10px; }
.props-table td.n { text-align: left; padding-left: 1px; background: linear-gradient(#fbfaf6, #ece9d8); font: 11px/18px "Liberation Mono", monospace; }
.props-table td.name { padding-left: 20px; }
.props-table td.v { padding-left: 2px; }
.link { color: #0000ff; }
.muted { color: #8a8a8a; }
.props-table td.muted { padding-left: 3px; }
.plus { display: inline-block; width: 13px; height: 13px; margin: 0 4px 0 0; border: 1px solid #b5b3a5; background: #ece9d8; color: #000; font: 12px/11px "Liberation Sans", sans-serif; text-align: center; vertical-align: -2px; }
.cur td.n { background: #fbd68f; color: #60106a; }
.cur td.name { background: #316ac5; color: #fff; }
.cur td.v { background: #dfe8f6; }

/* dialog */
.dialog { position: absolute; left: 196px; top: 97px; width: 460px; height: 588px; z-index: 3; background: #0a3fd0; border: 3px solid; border-color: #0b50e8 #0b45d8 #0a38b8; border-top: 0; border-radius: 6px 6px 0 0; }
.dlg-title { height: 27px; margin: 0 -3px; padding: 0 5px 2px 8px; display: flex; justify-content: space-between; align-items: center; background: linear-gradient(#0a7bf0 0, #0056e6 12%, #0a5cec 55%, #0c62f4 85%, #0548d2 100%); border-radius: 6px 6px 0 0; color: #fff; font: bold 14px/18px "Noto Sans CJK SC", sans-serif; text-shadow: 1px 1px 0 #0a2fa0; }
.dlg-close { width: 20px; height: 20px; border: 1px solid #fff; border-radius: 3px; background: linear-gradient(135deg, #f09a7c, #d8431c); display: flex; align-items: center; justify-content: center; }
.dlg-close svg { width: 16px; height: 16px; display: block; }
.dlg-body { height: 558px; background: #ece9d8; display: flex; flex-direction: column; }
.thumbs { display: grid; grid-template-columns: 222px 222px; grid-auto-rows: 138px; gap: 5px 4px; padding: 5px 0 0 4px; }
.thumb { background: #000; position: relative; box-shadow: 0 0 0 1px #fbfaf5; overflow: hidden; }
.thumb svg, .preview svg { display: block; width: 100%; height: 100%; }
.thumb.selected { outline: 3px solid #ff0000; outline-offset: -3px; }
.preview { margin: 6px 0 0 2px; width: 451px; height: 224px; background: #000; box-shadow: 0 0 0 1px #fbfaf5; }
.ln { fill: none; stroke: #fff; stroke-width: 3; shape-rendering: crispEdges; }
.g { fill: #00e000; font-family: "Liberation Sans", sans-serif; }
.w { fill: #fff; font-family: "Liberation Sans", "Noto Sans CJK SC", sans-serif; }
.c { fill: #8fd0f0; font-family: "Liberation Sans", sans-serif; }
.w-serif { fill: #fff; font-family: "Liberation Serif", serif; }
.t26 { font-size: 26px; } .t30 { font-size: 30px; } .t33 { font-size: 33px; }
.t46 { font-size: 46px; } .t58 { font-size: 58px; }
.lab { fill: #fff; font: bold 48px "Liberation Serif", "Noto Sans CJK SC", serif; text-anchor: middle; }
.lab-lg { fill: #fff; font: 86px "Liberation Serif", "Noto Sans CJK SC", serif; text-anchor: middle; }
.dlg-foot { flex: 1; display: flex; justify-content: flex-end; align-items: flex-start; gap: 14px; padding: 12px 13px 0 0; }
.btn { width: 71px; height: 22px; padding: 0; border: 1px solid #003c74; border-radius: 3px; background: linear-gradient(#fff, #ecebe6 85%, #d6d0c5); font: 12px/18px "Noto Sans CJK SC", sans-serif; color: #000; }
.btn-default { box-shadow: inset 0 0 0 1px #7ba2e7; outline: 1px dotted #333; outline-offset: -4px; }
```
